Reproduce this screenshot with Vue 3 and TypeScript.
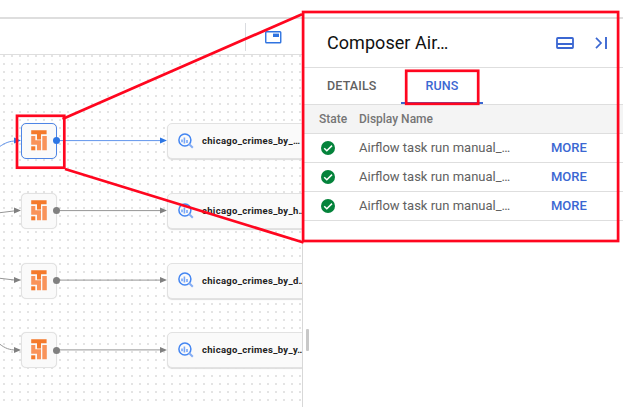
<script setup lang="ts">
interface Task {
  label: string
  y: number
  active: boolean
  incoming: string
}

const tasks: Task[] = [
  { label: 'chicago_crimes_by_…', y: 123, active: true, incoming: 'M-1 147 C5 143 9 141 16 141' },
  { label: 'chicago_crimes_by_h…', y: 193, active: false, incoming: 'M-1 212.8 L16 210.7' },
  { label: 'chicago_crimes_by_d…', y: 262.5, active: false, incoming: 'M-1 278.2 L16 280.2' },
  { label: 'chicago_crimes_by_y…', y: 332.3, active: false, incoming: 'M-1 343.5 C5 348.5 10 350 16 350' },
]

const runs: string[] = Array.from({ length: 3 }, () => 'Airflow task run manual_…')
</script>

<template>
  <div class="page">
    <header class="topbar"></header>
    <div class="workspace">
      <main class="graph">
        <div class="toolbar">
          <svg class="minimap" viewBox="0 0 17 13" width="17" height="13">
            <rect x="0.75" y="0.75" width="15" height="11" rx="0.8" fill="none" stroke="#2f73e0" stroke-width="1.4" />
            <rect x="8" y="2.6" width="6" height="3.4" fill="#2f73e0" />
          </svg>
        </div>
        <div class="canvas"></div>
      </main>
      <aside class="panel">
        <div class="panel-head">
          <h1>Composer Air…</h1>
          <svg class="dock" viewBox="0 0 18 12" width="18" height="12">
            <path d="M1.8 1H16.2Q17 1 17 1.8V10.2Q17 11 16.2 11H1.8Q1 11 1 10.2V1.8Q1 1 1.8 1Z M1 7H17" fill="none" stroke="#3b67d2" stroke-width="1.8" />
          </svg>
          <svg class="collapse" viewBox="0 0 13 12" width="13" height="12">
            <path d="M1 .9 L6 6 L1 11.1" fill="none" stroke="#3b67d2" stroke-width="1.7" />
            <path d="M11 0V12" stroke="#3b67d2" stroke-width="1.9" />
          </svg>
        </div>
        <nav class="tabs">
          <span class="tab details">DETAILS</span>
          <span class="tab selected">RUNS</span>
        </nav>
        <div class="row table-head">
          <span class="state">State</span>
          <span>Display Name</span>
        </div>
        <div v-for="(run, i) in runs" :key="i" class="row">
          <span class="state">
            <svg viewBox="0 0 14 14" width="14" height="14">
              <circle cx="7" cy="7" r="7" fill="#04833b" />
              <path d="M3.2 7.2 L5.8 9.8 L11 4.6" fill="none" stroke="#fff" stroke-width="1.5" />
            </svg>
          </span>
          <span class="run-name">{{ run }}</span>
          <a class="more">MORE</a>
        </div>
        <div class="handle"></div>
      </aside>
    </div>

    <div class="diagram">
      <svg class="edges" viewBox="0 0 302 407" width="302" height="407">
        <g v-for="t in tasks" :key="t.y" :class="['edge', { active: t.active }]">
          <path :d="t.incoming" class="wire" />
          <path :d="`M57 ${t.y + 17.6}H162`" class="wire" />
          <path :d="`M14 ${t.y + 14.6}L21 ${t.y + 17.6}L14 ${t.y + 20.6}Z`" />
          <path :d="`M160 ${t.y + 14.6}L167 ${t.y + 17.6}L160 ${t.y + 20.6}Z`" />
        </g>
      </svg>
      <template v-for="t in tasks" :key="t.label">
        <div :class="['node', 'source', { active: t.active }]" :style="{ top: t.y + 'px' }">
          <svg viewBox="0 0 16 21" width="16" height="21">
            <path d="M.2 .2H15.6V4.3H10V9.4H6V4.3H.2Z" fill="#f47a2c" />
            <path d="M.2 6H4.3V10.3H10V20.3H6V14.8H.2Z M11.3 6H15.8V20.3H11.3Z" fill="#f9935a" />
            <path d="M.2 16.3H4.3V20.3H.2Z" fill="#f47a2c" />
          </svg>
        </div>
        <div :class="['port', { active: t.active }]" :style="{ top: t.y + 14.2 + 'px' }"></div>
        <div class="node target" :style="{ top: t.y + 'px' }">
          <svg viewBox="0 0 16 16" width="16" height="16">
            <path d="M4 6.5V9.3M6.4 4.5V10.6M9 7V10.1" stroke="#78a7f7" stroke-width="1.6" />
            <circle cx="6.9" cy="7" r="6" fill="none" stroke="#4486f2" stroke-width="1.5" />
            <path d="M11 11 L14.8 14.8" stroke="#85adf4" stroke-width="2" />
          </svg>
          <span>{{ t.label }}</span>
        </div>
      </template>
    </div>

    <svg class="callout" viewBox="0 0 623 407" width="623" height="407">
      <rect x="17" y="115.8" width="47.3" height="51.9" />
      <rect x="406.2" y="70.8" width="72" height="33" />
      <rect x="303.1" y="12" width="315" height="229" />
      <path d="M62.5 119 L302 14.2 M65 169 L303.5 242.5" />
    </svg>
  </div>
</template>

<style>
body {
  margin: 0;
}
</style>

<style scoped>
.page {
  position: relative;
  width: 623px;
  height: 407px;
  overflow: hidden;
  background: #fff;
  font-family: Roboto, "Liberation Sans", sans-serif;
  display: flex;
  flex-direction: column;
}
.topbar {
  box-sizing: border-box;
  height: 19px;
  border-bottom: 2px solid #dedede;
}
.workspace {
  flex: 1;
  display: flex;
}
.graph {
  width: 302px;
  display: flex;
  flex-direction: column;
}
.toolbar {
  box-sizing: border-box;
  height: 36px;
  border-bottom: 1px solid #dedede;
  display: flex;
  justify-content: flex-end;
  align-items: center;
  padding: 1px 20px 0 0;
}
.toolbar::before {
  content: "";
  width: 1px;
  height: 28px;
  background: #dadce0;
  margin-right: 19px;
}
.canvas {
  flex: 1;
  background: conic-gradient(from 270deg at 5px 2px, #e4e4e4 90deg, transparent 0) 0 0 / 8px 8px;
  mask: linear-gradient(90deg, transparent 3px, #000 3px, #000 5px, transparent 5px) 0 0 / 8px 8px;
}
.panel {
  position: relative;
  box-sizing: border-box;
  width: 321px;
  border-left: 1px solid #d8d8d8;
  background: #fff;
}
.panel-head {
  box-sizing: border-box;
  height: 49px;
  border-bottom: 1px solid #dedede;
  display: flex;
  align-items: center;
  padding: 0 15px 0 24px;
}
h1 {
  flex: 1;
  margin: 0;
  font-size: 18px;
  font-weight: 400;
  letter-spacing: 0.05px;
  line-height: 24px;
  color: #111;
}
.dock {
  margin-right: 21px;
}
.tabs {
  box-sizing: border-box;
  height: 37px;
  border-bottom: 1px solid #dedede;
  display: flex;
}
.tab {
  box-sizing: border-box;
  height: 36px;
  line-height: 36px;
  font-size: 12.5px;
  font-weight: 500;
  letter-spacing: 0.15px;
  color: #616161;
}
.details {
  width: 98px;
  padding-left: 24px;
}
.selected {
  width: 82px;
  text-align: center;
  color: #3b67d2;
  border-bottom: 2px solid #3b67d2;
}
.row {
  box-sizing: border-box;
  height: 29px;
  border-bottom: 1px solid #dedede;
  display: flex;
  align-items: center;
  font-size: 13px;
  color: #616161;
  white-space: nowrap;
}
.table-head {
  background: #f4f4f4;
  font-size: 12px;
  font-weight: 500;
  color: #757575;
}
.state {
  box-sizing: border-box;
  width: 56px;
  padding-left: 16px;
  display: flex;
}
.row:not(.table-head) .state {
  padding-left: 18px;
}
.run-name,
.more {
  padding-bottom: 2px;
}
.run-name {
  width: 192px;
}
.more {
  font-weight: 500;
  color: #3b67d2;
}
.handle {
  position: absolute;
  left: 3px;
  top: 310px;
  width: 3px;
  height: 22px;
  border-radius: 1px;
  background: #c8c8c8;
}
.diagram {
  position: absolute;
  left: 0;
  top: 0;
  width: 302px;
  height: 407px;
  overflow: hidden;
}
.edges {
  position: absolute;
  left: 0;
  top: 0;
}
.edge {
  fill: #808080;
  stroke: none;
}
.edge.active {
  fill: #2d76e4;
}
.wire {
  fill: none;
  stroke: #969696;
  stroke-width: 1;
}
.active .wire {
  stroke: #6295ec;
}
.node {
  position: absolute;
  box-sizing: border-box;
  height: 36px;
  border: 1px solid #e2e2e2;
  border-radius: 5px;
  background: #fafafa;
  box-shadow: 0 0 1px #ddd;
  display: flex;
  align-items: center;
}
.source {
  left: 21px;
  width: 36px;
  justify-content: center;
  padding-bottom: 1px;
}
.source.active {
  border-color: #4d85e6;
}
.target {
  left: 167px;
  width: 160px;
  padding: 0 0 1px 10px;
  gap: 8px;
  box-shadow: 0 1px 1px #ddd;
}
.target span {
  font-size: 9.5px;
  font-weight: 700;
  letter-spacing: 0.3px;
  color: #222;
  white-space: nowrap;
}
.port {
  position: absolute;
  left: 53px;
  width: 7px;
  height: 7px;
  border-radius: 50%;
  background: #808080;
}
.port.active {
  background: #2d76e4;
}
.callout {
  position: absolute;
  left: 0;
  top: 0;
  fill: none;
  stroke: #ff061f;
  stroke-width: 2.7;
}
</style>
